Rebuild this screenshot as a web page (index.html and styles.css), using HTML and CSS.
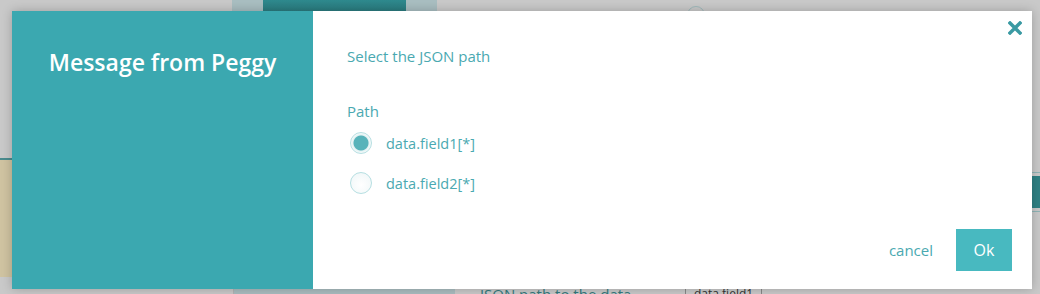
FILE: index.html
```html
<!DOCTYPE html>
<html lang="en">
<head>
    <meta charset="UTF-8">
    <title>Message from Peggy</title>
    <link rel="stylesheet" href="styles.css">
</head>
<body>
    <!-- Page behind the overlay -->
    <div class="page">
        <div class="page-top">
            <span class="tab tab-light"></span>
            <span class="tab tab-dark"></span>
            <span class="tab tab-light"></span>
            <span class="tab-ring"></span>
        </div>
        <div class="page-middle">
            <div class="side-left"><span class="beige"></span></div>
            <div class="side-fill"></div>
            <div class="side-right"><span class="teal-bar"></span></div>
        </div>
        <div class="page-bottom">
            <span class="cell-grey"></span>
            <span class="cell-blue"></span>
            <span class="field-label">JSON path to the data</span>
            <span class="field-value">data.field1</span>
        </div>
    </div>

    <!-- Modal -->
    <div class="modal">
        <div class="modal-side">
            <h1>Message from Peggy</h1>
        </div>
        <div class="modal-body">
            <p class="modal-text">Select the JSON path</p>
            <form class="path-form">
                <div class="path-title">Path</div>
                <label class="radio-row">
                    <input type="radio" name="path" checked>
                    <span class="radio-mark"></span>
                    <span>data.field1[*]</span>
                </label>
                <label class="radio-row">
                    <input type="radio" name="path">
                    <span class="radio-mark"></span>
                    <span>data.field2[*]</span>
                </label>
            </form>
            <div class="modal-footer">
                <a href="#" class="cancel-link">cancel</a>
                <button type="button" class="ok-btn">Ok</button>
            </div>
        </div>
        <button type="button" class="close-btn" aria-label="Close">
            <svg width="14" height="14" viewBox="0 0 14 14">
                <path d="M2 2 L12 12 M12 2 L2 12" stroke="#3a9aa3" stroke-width="3.4" stroke-linecap="square"/>
            </svg>
        </button>
    </div>
</body>
</html>
```

FILE: styles.css
```css
* {
    margin: 0;
    padding: 0;
    box-sizing: border-box;
}

body {
    width: 1040px;
    height: 294px;
    overflow: hidden;
    background-color: #c9c9c9;
    font-family: "Open Sans", "Liberation Sans", sans-serif;
    position: relative;
}

/* background page (already dimmed) */
.page {
    display: flex;
    flex-direction: column;
    height: 294px;
}

.page-top {
    display: flex;
    height: 11px;
    padding-left: 232px;
}

.tab {
    height: 11px;
}

.tab-light {
    width: 31px;
    background-color: #a9bec1;
}

.tab-dark {
    width: 143px;
    background: linear-gradient(#2f8a8e, #2a7b7f);
}

.tab-ring {
    width: 18px;
    height: 18px;
    margin: 6px 0 0 250px;
    border: 1px solid #9fb9bb;
    border-radius: 50%;
}

.page-middle {
    display: flex;
    height: 278px;
}

.side-left {
    width: 12px;
    padding-top: 147px;
}

.beige {
    display: block;
    height: 119px;
    background-color: #cfc3a1;
    border-top: 2px solid #4a8b8e;
}

.side-fill {
    flex: 1;
}

.side-right {
    width: 8px;
    padding-top: 161px;
}

.teal-bar {
    display: block;
    height: 40px;
    border-top: 1px solid #8fb4b6;
    border-bottom: 1px solid #8fb4b6;
    padding: 3px 0;
    background-clip: content-box;
    background-color: #2f8184;
}

.page-bottom {
    display: flex;
    height: 5px;
    align-items: flex-start;
}

.cell-grey {
    width: 234px;
    height: 5px;
    border-right: 1px solid #b3b3b3;
}

.cell-blue {
    width: 221px;
    height: 5px;
    background-color: #aabdc0;
}

.field-label {
    margin-left: 25px;
    margin-top: -3px;
    font-size: 15px;
    line-height: 16px;
    color: #34797d;
    width: 205px;
}

.field-value {
    margin-top: -3px;
    padding: 0 8px;
    font-size: 12px;
    line-height: 16px;
    color: #333;
    border-left: 1px solid #888;
    border-right: 1px solid #888;
}

/* modal */
.modal {
    position: absolute;
    left: 12px;
    top: 11px;
    width: 1020px;
    height: 278px;
    display: flex;
    background-color: #ffffff;
    box-shadow: 0 0 10px rgba(0, 0, 0, 0.22);
}

.modal-side {
    width: 301px;
    background-color: #3ba8b0;
    padding-top: 35px;
    text-align: center;
}

.modal-side h1 {
    color: #ffffff;
    font-size: 23px;
    font-weight: 600;
    line-height: 32px;
}

.modal-body {
    flex: 1;
    display: flex;
    flex-direction: column;
    padding: 35px 20px 18px 34px;
    color: #4aa9b1;
}

.modal-text {
    font-size: 15px;
    line-height: 20px;
}

.path-form {
    margin-top: 35px;
}

.path-title {
    font-size: 15px;
    line-height: 20px;
    margin-bottom: 2px;
}

.radio-row {
    display: flex;
    align-items: center;
    gap: 14px;
    height: 40px;
    padding-left: 3px;
    font-size: 14.5px;
    cursor: pointer;
}

.radio-row input {
    display: none;
}

.radio-mark {
    width: 22px;
    height: 22px;
    border-radius: 50%;
    border: 1px solid #b6dfe2;
    background: radial-gradient(circle at 50% 60%, #ffffff, #eef6f7);
}

.radio-row input:checked + .radio-mark {
    background: radial-gradient(circle, #57b3ba 0, #57b3ba 7px, #e3f2f3 8px, #ffffff 11px);
}

.modal-footer {
    margin-top: auto;
    display: flex;
    justify-content: flex-end;
    align-items: center;
    gap: 23px;
}

.cancel-link {
    color: #4aa9b1;
    font-size: 15px;
    text-decoration: none;
}

.ok-btn {
    width: 56px;
    height: 42px;
    border: none;
    background-color: #48b9c0;
    color: #ffffff;
    font-family: inherit;
    font-size: 16px;
    cursor: pointer;
}

.close-btn {
    position: absolute;
    top: 10px;
    right: 10px;
    width: 14px;
    height: 14px;
    border: none;
    background: none;
    cursor: pointer;
    display: flex;
}
```
